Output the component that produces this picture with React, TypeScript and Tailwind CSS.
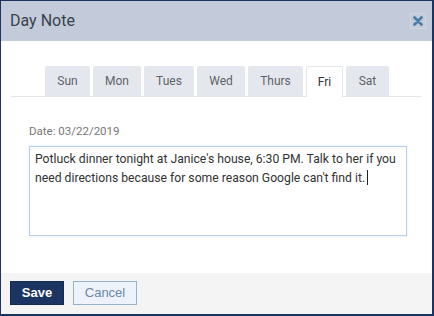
const DAYS = [
  { label: "Sun", w: "w-[45px]" },
  { label: "Mon", w: "w-[48px]" },
  { label: "Tues", w: "w-[50px]" },
  { label: "Wed", w: "w-[48px]" },
  { label: "Thurs", w: "w-[55px]" },
  { label: "Fri", w: "w-[37px]" },
  { label: "Sat", w: "w-[43px]" },
];

export default function App() {
  const active = "Fri";
  return (
    <div className="w-[434px] h-[316px] flex flex-col bg-white border border-r-2 border-b-2 border-[#1d3461] font-['Roboto',sans-serif] overflow-hidden">
      {/* header */}
      <div className="h-[40px] shrink-0 flex items-center justify-between bg-[#c3cbda] pl-[9px] pr-[6px]">
        <span className="text-[16px] text-[#38414d]">Day Note</span>
        <div className="w-[16px] h-[16px] flex items-center justify-center border border-[#d3d6dc]">
          <svg width="10" height="10" viewBox="0 0 10 10">
            <path d="M1.5 1.5L8.5 8.5M8.5 1.5L1.5 8.5" stroke="#4a7ba6" strokeWidth="2.6" strokeLinecap="round" />
          </svg>
        </div>
      </div>

      {/* body */}
      <div className="flex-1 flex flex-col">
        <div className="mt-[25px] mx-[10px] flex gap-[3px] pl-[34px] border-b border-[#e3e6ea]">
          {DAYS.map((d) => (
            <div
              key={d.label}
              className={
                d.label === active
                  ? `${d.w} h-[31px] -mb-px flex items-center justify-center bg-white border border-b-0 border-[#e3e6ea] text-[12px] text-[#333] rounded-t-[2px]`
                  : `${d.w} h-[30px] flex items-center justify-center bg-[#e4e8ee] text-[12px] text-[#5f6368] rounded-t-[2px]`
              }
            >
              {d.label}
            </div>
          ))}
        </div>

        <div className="mt-[26px] ml-[28px] text-[11.5px] text-[#777]">Date: 03/22/2019</div>

        <div className="mt-[6px] ml-[28px] w-[378px] h-[90px] border border-[#b9cff0] shadow-[0_0_2px_#d8e5fa] px-[5px] pt-[3px] text-[12.2px] leading-[19px] text-[#333]">
          Potluck dinner tonight at Janice's house, 6:30 PM. Talk to her if you need directions because for some reason Google can't find it.
          <span className="inline-block w-px h-[15px] bg-[#222] align-[-3px] ml-[2px]" />
        </div>
      </div>

      {/* footer */}
      <div className="h-[41px] shrink-0 bg-[#f4f4f4] flex items-center gap-[9px] px-[9px] pb-[2px]">
        <button className="w-[54px] h-[24px] bg-[#1c3462] text-white text-[13px] font-bold font-['Liberation_Sans',sans-serif] border border-[#142a52]">
          Save
        </button>
        <button className="w-[64px] h-[24px] bg-[#eef3fb] text-[#6a89a6] text-[13px] font-['Liberation_Sans',sans-serif] border border-[#94b3ca]">
          Cancel
        </button>
      </div>
    </div>
  );
}
